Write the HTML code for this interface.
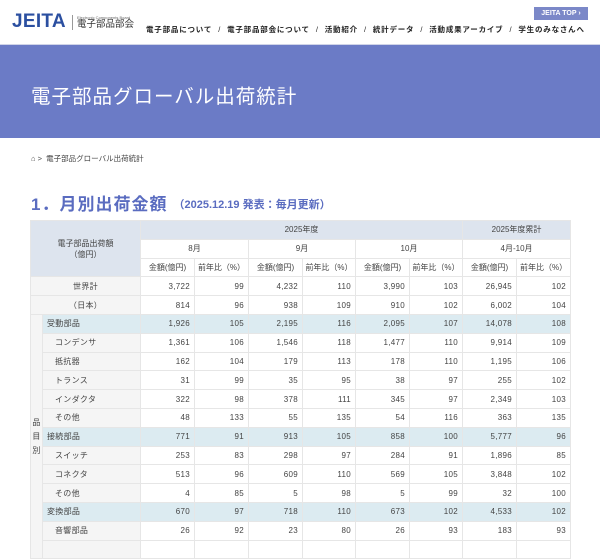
<!DOCTYPE html>
<html><head><meta charset="utf-8"><style>
*{margin:0;padding:0;box-sizing:border-box}
body{width:600px;height:542px;overflow:hidden;background:#fff;font-family:"Liberation Sans","Noto Sans CJK JP",sans-serif;color:#333;position:relative}
.logo{position:absolute;left:12px;top:11px;font-weight:bold;font-size:19px;color:#2b4fa0;letter-spacing:0.3px}
.logo2{position:absolute;left:72px;top:15px;border-left:1px solid #999;padding-left:4px}
.logo2 .s{font-size:4px;color:#666;display:block;line-height:5px}
.logo2 .b{font-size:9.5px;color:#333;line-height:10px;display:block}
.top{position:absolute;left:534px;top:7px;width:54px;height:13px;background:#7b88c8;color:#fff;font-size:7px;font-weight:bold;text-align:center;line-height:13px}
.nav{position:absolute;left:146px;top:24px;font-size:7.5px;font-weight:bold;color:#222;white-space:nowrap;letter-spacing:.8px}
.nav span{margin:0 6px;font-weight:normal}
.banner{position:absolute;left:0;top:44px;width:600px;height:94px;background:#6b7bc6;border-top:1px solid #d0d4e8}
.banner h1{position:absolute;left:31px;top:35px;font-size:19.5px;color:#fff;font-weight:normal;letter-spacing:1px}
.bc{position:absolute;left:31px;top:153px;font-size:7.5px;color:#444}
.h2{position:absolute;left:31px;top:190px;font-size:17px;font-weight:bold;color:#5a6cc0;letter-spacing:1px}
.h2 small{font-size:11px;letter-spacing:0;margin-left:6px;position:relative;top:-2px}
table{position:absolute;left:30px;top:220px;border-collapse:collapse;table-layout:fixed;width:540px;font-size:8px;color:#444}
td,th{border:1px solid #e6e6e6;height:18.8px;padding:0 4px;font-weight:normal;letter-spacing:.3px;white-space:nowrap;overflow:hidden}
th{background:#fff;text-align:center;font-size:8px;padding:0;letter-spacing:0}
.hd{background:#dde4ee;white-space:normal}
td{text-align:right}
td.l{text-align:center;background:#f5f5f5}
td.c{text-align:left;background:#dcebf1}
tr.cat td{background:#dcebf1}
td.s{text-align:left;background:#f5f5f5;padding-left:12px}
tr.cat td.k,td.k{background:#f5f5f5;text-align:center;padding:0;line-height:14px;white-space:normal}
</style></head><body>
<div class="logo">JEITA</div>
<div class="logo2"><span class="s">Electronic Components Board</span><span class="b">電子部品部会</span></div>
<div class="top">JEITA TOP ›</div>
<div class="nav">電子部品について<span>/</span>電子部品部会について<span>/</span>活動紹介<span>/</span>統計データ<span>/</span>活動成果アーカイブ<span>/</span>学生のみなさんへ</div>
<div class="banner"><h1>電子部品グローバル出荷統計</h1></div>
<div class="bc">&#8962; &gt;&nbsp; 電子部品グローバル出荷統計</div>
<div class="h2">1．月別出荷金額<small>（2025.12.19 発表：毎月更新）</small></div>
<table>
<colgroup><col style="width:12px"><col style="width:98px"><col style="width:54px"><col style="width:54px"><col style="width:54px"><col style="width:53px"><col style="width:54px"><col style="width:53px"><col style="width:54px"><col style="width:54px"></colgroup>
<tr><th class="hd" colspan="2" rowspan="3">電子部品出荷額<br>（億円）</th><th class="hd" colspan="6">2025年度</th><th class="hd" colspan="2">2025年度累計</th></tr>
<tr><th colspan="2">8月</th><th colspan="2">9月</th><th colspan="2">10月</th><th colspan="2">4月-10月</th></tr>
<tr><th>金額(億円)</th><th>前年比（%）</th><th>金額(億円)</th><th>前年比（%）</th><th>金額(億円)</th><th>前年比（%）</th><th>金額(億円)</th><th>前年比（%）</th></tr>
<tr><td class="l" colspan="2">世界計</td><td>3,722</td><td>99</td><td>4,232</td><td>110</td><td>3,990</td><td>103</td><td>26,945</td><td>102</td></tr>
<tr><td class="l" colspan="2">（日本）</td><td>814</td><td>96</td><td>938</td><td>109</td><td>910</td><td>102</td><td>6,002</td><td>104</td></tr>
<tr class="cat"><td class="k" rowspan="13">品<br>目<br>別</td><td class="c">受動部品</td><td>1,926</td><td>105</td><td>2,195</td><td>116</td><td>2,095</td><td>107</td><td>14,078</td><td>108</td></tr>
<tr><td class="s">コンデンサ</td><td>1,361</td><td>106</td><td>1,546</td><td>118</td><td>1,477</td><td>110</td><td>9,914</td><td>109</td></tr>
<tr><td class="s">抵抗器</td><td>162</td><td>104</td><td>179</td><td>113</td><td>178</td><td>110</td><td>1,195</td><td>106</td></tr>
<tr><td class="s">トランス</td><td>31</td><td>99</td><td>35</td><td>95</td><td>38</td><td>97</td><td>255</td><td>102</td></tr>
<tr><td class="s">インダクタ</td><td>322</td><td>98</td><td>378</td><td>111</td><td>345</td><td>97</td><td>2,349</td><td>103</td></tr>
<tr><td class="s">その他</td><td>48</td><td>133</td><td>55</td><td>135</td><td>54</td><td>116</td><td>363</td><td>135</td></tr>
<tr class="cat"><td class="c">接続部品</td><td>771</td><td>91</td><td>913</td><td>105</td><td>858</td><td>100</td><td>5,777</td><td>96</td></tr>
<tr><td class="s">スイッチ</td><td>253</td><td>83</td><td>298</td><td>97</td><td>284</td><td>91</td><td>1,896</td><td>85</td></tr>
<tr><td class="s">コネクタ</td><td>513</td><td>96</td><td>609</td><td>110</td><td>569</td><td>105</td><td>3,848</td><td>102</td></tr>
<tr><td class="s">その他</td><td>4</td><td>85</td><td>5</td><td>98</td><td>5</td><td>99</td><td>32</td><td>100</td></tr>
<tr class="cat"><td class="c">変換部品</td><td>670</td><td>97</td><td>718</td><td>110</td><td>673</td><td>102</td><td>4,533</td><td>102</td></tr>
<tr><td class="s">音響部品</td><td>26</td><td>92</td><td>23</td><td>80</td><td>26</td><td>93</td><td>183</td><td>93</td></tr>
<tr><td class="s">&nbsp;</td><td></td><td></td><td></td><td></td><td></td><td></td><td></td><td></td></tr>
</table>
</body></html>
